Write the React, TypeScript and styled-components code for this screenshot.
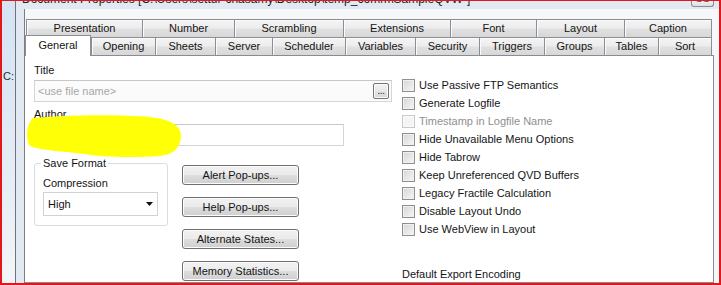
import React from 'react';
import styled, { createGlobalStyle } from 'styled-components';

const GlobalStyle = createGlobalStyle`
  html, body { margin: 0; padding: 0; background: #fff; }
  body {
    font-family: "Liberation Sans", Arial, sans-serif;
    font-size: 11px;
    color: #141414;
  }
  #root { width: 721px; height: 285px; }
`;

const Frame = styled.div`
  position: relative;
  box-sizing: border-box;
  width: 721px;
  height: 285px;
  border: 2px solid #e3161b;
  border-top-width: 1px;
  display: flex;
  overflow: hidden;
  background: #fff;
`;

const Desktop = styled.div`
  flex: none;
  width: 13px;
  box-sizing: border-box;
  padding: 68px 0 0 1px;
  background: linear-gradient(#d5e3f3, #e3ebf5 55%, #f3f5f8);
  color: #2a2a2a;
  font-size: 11px;
  line-height: 14px;
`;

const Window = styled.div`
  flex: 1;
  min-width: 0;
  display: flex;
  flex-direction: column;
  border-left: 1px solid #6f7478;
  background: #e2e9f2;
`;

const TitleBar = styled.div`
  flex: none;
  height: 8px;
  display: flex;
  justify-content: space-between;
  align-items: flex-start;
  overflow: hidden;
  padding-left: 6px;
`;

const TitleText = styled.span`
  font-size: 12px;
  line-height: 12px;
  margin-top: -8px;
  white-space: nowrap;
  color: #1f1f1f;
`;

const TitleButton = styled.div`
  flex: none;
  width: 23px;
  height: 6px;
  margin-right: 5px;
  box-sizing: border-box;
  border: 1px solid #8d8d8d;
  border-top: none;
  border-radius: 0 0 3px 3px;
  background: linear-gradient(#f0f2f4, #dcdfe3);
  overflow: hidden;
  text-align: center;
  font-size: 11px;
  line-height: 11px;
  color: #555;
`;

const TitleButtonText = styled.span`
  display: block;
  margin-top: -8px;
`;

const WindowBody = styled.div`
  flex: 1;
  min-height: 0;
  display: flex;
  padding-left: 8px;
`;

const Client = styled.div`
  flex: 1;
  min-width: 0;
  display: flex;
  flex-direction: column;
  border-left: 1px solid #7b7f84;
  background: #f6f7f8;
  padding-top: 10px;
`;

const TabRow = styled.div<{ $offset: number }>`
  flex: none;
  display: flex;
  height: 18px;
  margin-left: ${(p) => p.$offset}px;
  align-items: flex-start;
`;

const Tab = styled.div<{ $w: number; $last?: boolean; $selected?: boolean }>`
  box-sizing: border-box;
  flex: none;
  width: ${(p) => p.$w}px;
  height: ${(p) => (p.$selected ? 21 : 18)}px;
  margin-top: ${(p) => (p.$selected ? -2 : 0)}px;
  position: ${(p) => (p.$selected ? 'relative' : 'static')};
  z-index: ${(p) => (p.$selected ? 1 : 'auto')};
  border-top: 1px solid #8b8e94;
  border-left: 1px solid #8b8e94;
  border-right: ${(p) => (p.$last || p.$selected ? '1px solid #8b8e94' : 'none')};
  background: ${(p) =>
    p.$selected
      ? '#ffffff'
      : 'linear-gradient(#f4f4f4, #ededed 45%, #e0e0e0 55%, #d7d7d7)'};
  box-shadow: ${(p) => (p.$selected ? 'none' : 'inset 1px 1px 0 #fbfbfb')};
  text-align: center;
  line-height: ${(p) => (p.$selected ? 19 : 17)}px;
  font-size: 11px;
  color: #141414;
  white-space: nowrap;
`;

const Panel = styled.div`
  flex: 1;
  min-height: 0;
  margin-right: 5px;
  border: 1px solid #898c95;
  border-left: none;
  background: #fff;
  display: grid;
  grid-template-columns: 358px 1fr;
  column-gap: 10px;
  padding-left: 9px;
`;

const LeftCol = styled.div`
  display: flex;
  flex-direction: column;
  padding-top: 7px;
`;

const FieldLabel = styled.div<{ $gap?: number }>`
  line-height: 14px;
  margin-top: ${(p) => p.$gap ?? 0}px;
  margin-bottom: 3px;
`;

const TextBox = styled.div<{ $w: number; $muted?: boolean }>`
  box-sizing: border-box;
  width: ${(p) => p.$w}px;
  height: 22px;
  border: 1px solid #d3d5d8;
  border-top-color: #c4c7cb;
  background: ${(p) => (p.$muted ? '#fbfbfb' : '#ffffff')};
  display: flex;
  align-items: center;
  justify-content: space-between;
  padding: 0 2px 0 3px;
`;

const Placeholder = styled.span`
  color: #a7a7a7;
  font-size: 11px;
`;

const BrowseButton = styled.div`
  box-sizing: border-box;
  width: 16px;
  height: 16px;
  border: 1px solid #747474;
  border-radius: 2px;
  background: linear-gradient(#f4f4f4, #e6e6e6 50%, #d4d4d4);
  box-shadow: inset 0 0 0 1px #fafafa;
  text-align: center;
  font-size: 10px;
  line-height: 14px;
  letter-spacing: -0.5px;
  color: #222;
`;

const BottomRow = styled.div`
  display: flex;
  gap: 14px;
  margin-top: 10px;
  align-items: flex-start;
`;

const GroupBox = styled.fieldset`
  box-sizing: border-box;
  width: 134px;
  margin: 0;
  padding: 0 8px 9px 8px;
  border: 1px solid #d6dde3;
  border-radius: 3px;
  min-inline-size: 0;
`;

const GroupLegend = styled.legend`
  padding: 0 2px;
  margin-left: -2px;
  line-height: 14px;
  font-size: 11px;
`;

const SmallLabel = styled.div`
  line-height: 14px;
  margin-top: 6px;
`;

const SelectBox = styled.div`
  box-sizing: border-box;
  width: 115px;
  height: 24px;
  margin-top: 2px;
  border: 1px solid #d0d2d5;
  background: #fff;
  display: flex;
  align-items: center;
  justify-content: space-between;
  padding: 0 4px 0 4px;
`;

const ButtonCol = styled.div`
  display: flex;
  flex-direction: column;
  gap: 12px;
  margin-top: 9px;
`;

const PushButton = styled.button`
  box-sizing: border-box;
  width: 117px;
  height: 20px;
  padding: 0;
  border: 1px solid #707070;
  border-radius: 3px;
  background: linear-gradient(#f2f2f2, #ebebeb 48%, #dddddd 52%, #cfcfcf);
  box-shadow: inset 0 0 0 1px #fcfcfc;
  font-family: "Liberation Sans", Arial, sans-serif;
  font-size: 11px;
  color: #141414;
  text-align: center;
`;

const RightCol = styled.div`
  display: flex;
  flex-direction: column;
  padding-top: 20px;
`;

const CheckRow = styled.div<{ $disabled?: boolean }>`
  display: flex;
  align-items: center;
  gap: 4px;
  height: 18px;
  color: ${(p) => (p.$disabled ? '#8f8f8f' : '#141414')};
`;

const CheckBox = styled.span<{ $disabled?: boolean }>`
  box-sizing: border-box;
  flex: none;
  width: 13px;
  height: 13px;
  border: 1px solid ${(p) => (p.$disabled ? '#c9c9c9' : '#8e8f8f')};
  background: ${(p) =>
    p.$disabled
      ? '#f4f4f4'
      : 'linear-gradient(135deg, #d4d4d4, #e6e6e6 50%, #f6f6f6)'};
  box-shadow: inset 0 0 0 1px ${(p) => (p.$disabled ? '#fbfbfb' : '#f0f0f0')};
`;

const SectionTitle = styled.div`
  line-height: 14px;
  margin-top: 29px;
`;

const Highlight = styled.svg`
  position: absolute;
  left: -2px;
  top: -1px;
  pointer-events: none;
`;

const backTabs: [string, number][] = [
  ['Presentation', 116],
  ['Number', 92],
  ['Scrambling', 109],
  ['Extensions', 107],
  ['Font', 86],
  ['Layout', 88],
  ['Caption', 88],
];

const frontTabs: [string, number][] = [
  ['General', 66],
  ['Opening', 64],
  ['Sheets', 60],
  ['Server', 57],
  ['Scheduler', 73],
  ['Variables', 70],
  ['Security', 64],
  ['Triggers', 65],
  ['Groups', 60],
  ['Tables', 54],
  ['Sort', 54],
];

const checks: [string, boolean][] = [
  ['Use Passive FTP Semantics', false],
  ['Generate Logfile', false],
  ['Timestamp in Logfile Name', true],
  ['Hide Unavailable Menu Options', false],
  ['Hide Tabrow', false],
  ['Keep Unreferenced QVD Buffers', false],
  ['Legacy Fractile Calculation', false],
  ['Disable Layout Undo', false],
  ['Use WebView in Layout', false],
];

const buttons = ['Alert Pop-ups...', 'Help Pop-ups...', 'Alternate States...', 'Memory Statistics...'];

export default function App() {
  return (
    <>
      <GlobalStyle />
      <Frame>
        <Desktop>C:</Desktop>
        <Window>
          <TitleBar>
            <TitleText>Document Properties [C:\Users\settur-chasamy\Desktop\temp_comm\SampleQVW"]</TitleText>
            <TitleButton>
              <TitleButtonText>SS</TitleButtonText>
            </TitleButton>
          </TitleBar>
          <WindowBody>
            <Client>
              <TabRow $offset={1}>
                {backTabs.map(([label, w], i) => (
                  <Tab key={label} $w={w} $last={i === backTabs.length - 1}>
                    {label}
                  </Tab>
                ))}
              </TabRow>
              <TabRow $offset={0}>
                {frontTabs.map(([label, w], i) => (
                  <Tab key={label} $w={w} $selected={i === 0} $last={i === frontTabs.length - 1}>
                    {label}
                  </Tab>
                ))}
              </TabRow>
              <Panel>
                <LeftCol>
                  <FieldLabel>Title</FieldLabel>
                  <TextBox $w={358} $muted>
                    <Placeholder>&lt;use file name&gt;</Placeholder>
                    <BrowseButton>...</BrowseButton>
                  </TextBox>
                  <FieldLabel $gap={5}>Author</FieldLabel>
                  <TextBox $w={310} />
                  <BottomRow>
                    <GroupBox>
                      <GroupLegend>Save Format</GroupLegend>
                      <SmallLabel>Compression</SmallLabel>
                      <SelectBox>
                        <span>High</span>
                        <svg width="7" height="4" viewBox="0 0 7 4">
                          <polygon points="0,0 7,0 3.5,4" fill="#111" />
                        </svg>
                      </SelectBox>
                    </GroupBox>
                    <ButtonCol>
                      {buttons.map((b) => (
                        <PushButton key={b}>{b}</PushButton>
                      ))}
                    </ButtonCol>
                  </BottomRow>
                </LeftCol>
                <RightCol>
                  {checks.map(([label, disabled]) => (
                    <CheckRow key={label} $disabled={disabled}>
                      <CheckBox $disabled={disabled} />
                      <span>{label}</span>
                    </CheckRow>
                  ))}
                  <SectionTitle>Default Export Encoding</SectionTitle>
                </RightCol>
              </Panel>
            </Client>
          </WindowBody>
        </Window>
        <Highlight width="721" height="285" viewBox="0 0 721 285">
          <path
            d="M33,118 C60,115 120,114 150,117 C168,119 181,124 181,136 C181,148 172,155 160,156 C130,158 100,157 85,154 C60,151 35,150 29,145 C26,138 26,124 33,118 Z"
            fill="#ffff06"
          />
        </Highlight>
      </Frame>
    </>
  );
}
